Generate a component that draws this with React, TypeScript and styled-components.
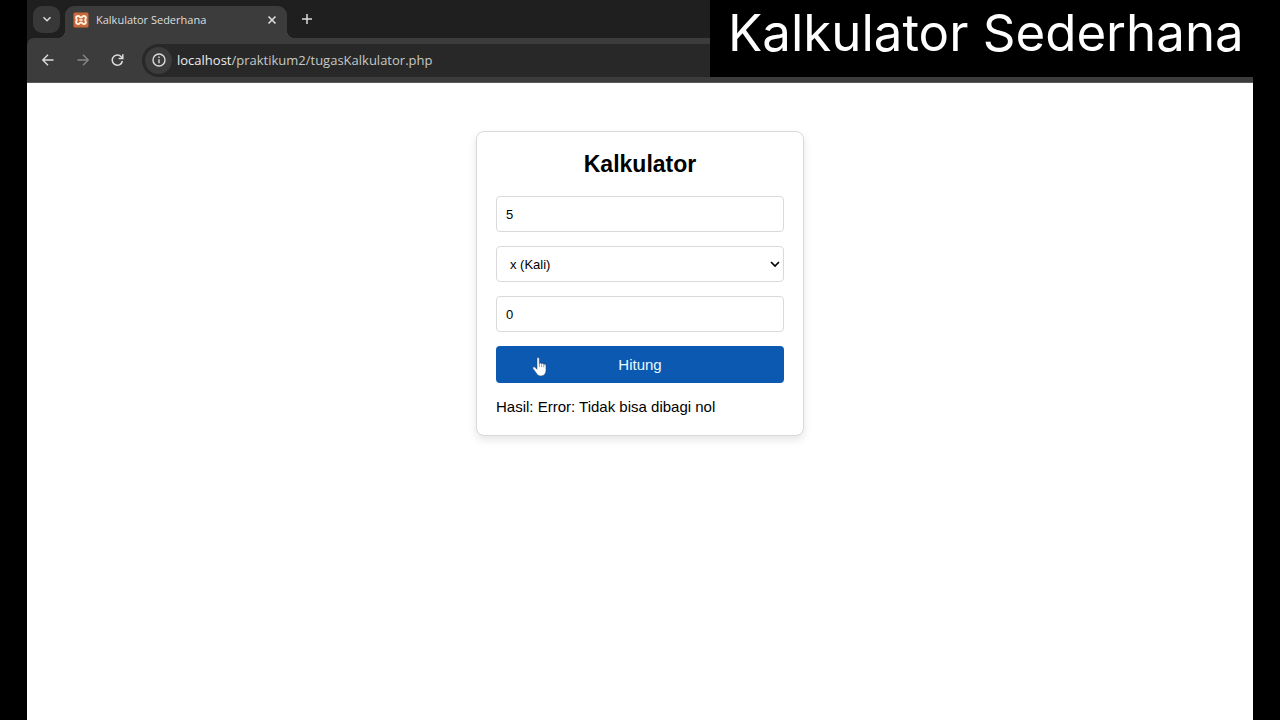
import React from "react";
import styled, { createGlobalStyle } from "styled-components";

const GlobalStyle = createGlobalStyle`
  *, *::before, *::after { box-sizing: border-box; }
  html, body, #root { height: 100%; margin: 0; }
  body { background: #000; font-family: "Liberation Sans", Arial, sans-serif; color: #000; }
  button, input, select { font-family: inherit; margin: 0; }
`;

const Stage = styled.div`
  position: relative;
  min-height: 100%;
  display: flex;
  padding: 0 27px;
`;

const Browser = styled.div`
  flex: 1;
  min-width: 0;
  display: flex;
  flex-direction: column;
  background: #fff;
`;

const TabStrip = styled.div`
  height: 38px;
  display: flex;
  align-items: flex-end;
  padding-left: 6px;
  background: #1f1f1f;
`;

const IconButton = styled.button<{ $size: number; $color?: string; $fill?: string; $radius?: number }>`
  flex: none;
  display: flex;
  align-items: center;
  justify-content: center;
  width: ${(p) => p.$size}px;
  height: ${(p) => p.$size}px;
  padding: 0;
  border: 0;
  border-radius: ${(p) => p.$radius ?? 14}px;
  background: ${(p) => p.$fill ?? "transparent"};
  color: ${(p) => p.$color ?? "#dcdcdc"};
`;

const TabSearch = styled.div`
  align-self: center;
  margin-right: 5px;
`;

const Tab = styled.div`
  position: relative;
  width: 222px;
  height: 32px;
  display: flex;
  align-items: center;
  gap: 7px;
  padding: 0 6px 4px 8px;
  border-radius: 9px 9px 0 0;
  background: #3c3c3c;

  &::before,
  &::after {
    content: "";
    position: absolute;
    bottom: 0;
    width: 8px;
    height: 8px;
  }
  &::before {
    right: 100%;
    background: radial-gradient(circle at 0 0, transparent 8px, #3c3c3c 8px);
  }
  &::after {
    left: 100%;
    background: radial-gradient(circle at 100% 0, transparent 8px, #3c3c3c 8px);
  }
`;

const TabTitle = styled.span`
  flex: 1;
  font: 11px/16px "Open Sans", "Noto Sans", sans-serif;
  color: #dedede;
  white-space: nowrap;
`;

const NewTab = styled.div`
  align-self: center;
  margin-left: 8px;
`;

const ToolbarBack = styled.div`
  background: #1f1f1f;
`;

const Toolbar = styled.div`
  height: 45px;
  display: flex;
  align-items: center;
  gap: 7px;
  padding: 0 7px;
  background: #3c3c3c;
  border-bottom: 1px solid #5a5a5a;
  border-top-left-radius: 7px;
`;

const AddressBar = styled.div`
  flex: 1;
  height: 33px;
  display: flex;
  align-items: center;
  gap: 5px;
  margin-left: 3px;
  padding: 0 3px;
  border-radius: 17px;
  background: #282828;
`;

const Address = styled.div`
  font: 13px/18px "Open Sans", "Noto Sans", sans-serif;
  color: #c6c9c4;
  white-space: nowrap;

  b { font-weight: 400; color: #ececec; }
`;

const Page = styled.main`
  flex: 1;
  display: flex;
  justify-content: center;
  align-items: flex-start;
  padding: 48px 20px;
`;

const Card = styled.form`
  width: 328px;
  display: flex;
  flex-direction: column;
  gap: 14px;
  padding: 19px;
  border: 1px solid #d9d9d9;
  border-radius: 8px;
  background: #fff;
  box-shadow: 0 4px 8px rgba(0, 0, 0, 0.1);
`;

const Title = styled.h1`
  margin: 0 0 4px;
  font-size: 23px;
  line-height: 27px;
  text-align: center;
`;

const Field = styled.input`
  width: 100%;
  height: 36px;
  padding: 0 9px;
  border: 1px solid #d9d9d9;
  border-radius: 4px;
  background: #fff;
  color: #000;
  font-size: 13px;
`;

const SelectWrap = styled.div`
  display: grid;
  align-items: center;

  > * { grid-area: 1 / 1; }
  > svg { justify-self: end; margin-right: 4px; pointer-events: none; }
`;

const Operator = styled(Field).attrs({ as: "select" })`
  appearance: none;
  padding: 0 13px;
`;

const Submit = styled.button`
  position: relative;
  height: 37px;
  border: 0;
  border-radius: 4px;
  background: #0b59b0;
  color: #e8fbff;
  font-size: 15px;
`;

const Pointer = styled.svg`
  position: absolute;
  left: 36px;
  top: 11px;
`;

const Result = styled.p`
  margin: 0;
  font-size: 15px;
  line-height: 19px;
`;

const Banner = styled.div`
  position: absolute;
  top: 0;
  right: 0;
  width: 570px;
  height: 77px;
  padding: 3px 0 0 18px;
  background: #000;
  color: #fff;
  font: 51px/60px Inter, sans-serif;
  white-space: nowrap;
`;

const line = { fill: "none", stroke: "currentColor" } as const;

export default function App() {
  return (
    <>
      <GlobalStyle />
      <Stage>
        <Browser>
          <TabStrip>
            <TabSearch>
              <IconButton $size={27} $fill="#383838" $radius={9} aria-label="Search tabs">
                <svg width="10" height="10" viewBox="0 0 10 10" {...line} strokeWidth="1.5"><path d="M1.5 3.2 5 6.7l3.500-3.500" /></svg>
              </IconButton>
            </TabSearch>
            <Tab>
              <svg width="16" height="16" viewBox="0 0 16 16">
                <rect x="0.500" y="0.500" width="15" height="15" rx="1.500" fill="#c9683a" />
                <path d="M5.200 4C6.800 4 6.800 5.600 8 5.600S9.200 4 10.800 4c1.300 0 2.100.9 2.100 1.900 0 .9-.7 1.300-.7 2.100s.7 1.200.7 2.100c0 1-.8 1.900-2.100 1.900-1.600 0-1.600-1.600-2.800-1.600S6.800 12 5.200 12c-1.300 0-2.100-.9-2.100-1.900 0-.9.7-1.300.7-2.100s-.7-1.200-.7-2.100C3.100 4.900 3.900 4 5.200 4z" fill="none" stroke="#fff1df" strokeWidth="1.900" />
                <path d="M6.300 8h3.400" stroke="#fff1df" strokeWidth="1.600" />
              </svg>
              <TabTitle>Kalkulator Sederhana</TabTitle>
              <IconButton $size={18} aria-label="Close tab">
                <svg width="10" height="10" viewBox="0 0 10 10" {...line} strokeWidth="1.6"><path d="M1.500 1.500l7 7M8.500 1.500l-7 7" /></svg>
              </IconButton>
            </Tab>
            <NewTab>
              <IconButton $size={23} aria-label="New tab">
                <svg width="12" height="12" viewBox="0 0 12 12" {...line} strokeWidth="1.5"><path d="M6 1v10M1 6h10" /></svg>
              </IconButton>
            </NewTab>
          </TabStrip>
          <ToolbarBack>
            <Toolbar>
              <IconButton $size={28} aria-label="Back">
                <svg width="14" height="14" viewBox="0 0 14 14" {...line} strokeWidth="1.400"><path d="M12.500 7H2M7 1.800 1.800 7 7 12.200" /></svg>
              </IconButton>
              <IconButton $size={28} $color="#868686" aria-label="Forward">
                <svg width="14" height="14" viewBox="0 0 14 14" {...line} strokeWidth="1.400"><path d="M1.500 7H12M7 1.800 12.200 7 7 12.200" /></svg>
              </IconButton>
              <IconButton $size={28} aria-label="Reload">
                <svg width="14" height="14" viewBox="0 0 14 14" {...line} strokeWidth="1.500"><path d="M11.400 8A5.100 5.100 0 1 1 10.200 3.700L11.600 5.100" /><path d="M11.800 1.300v4.200H7.600" /></svg>
              </IconButton>
              <AddressBar>
                <IconButton $size={27} $fill="#3c3c3c" aria-label="Site information">
                  <svg width="14" height="14" viewBox="0 0 14 14" {...line} strokeWidth="1.400"><circle cx="7" cy="7" r="6" /><path d="M7 6.200v4M7 3.600v1.500" /></svg>
                </IconButton>
                <Address><b>localhost</b>/praktikum2/tugasKalkulator.php</Address>
              </AddressBar>
            </Toolbar>
          </ToolbarBack>
          <Page>
            <Card onSubmit={(e) => e.preventDefault()}>
              <Title>Kalkulator</Title>
              <Field aria-label="Angka pertama" inputMode="decimal" defaultValue="5" />
              <SelectWrap>
                <Operator aria-label="Operator" defaultValue="kali">
                  <option value="kali">x (Kali)</option>
                </Operator>
                <svg width="10" height="8" viewBox="0 0 10 8" fill="none" stroke="#000" strokeWidth="1.700"><path d="M1 2l4 4 4-4" /></svg>
              </SelectWrap>
              <Field aria-label="Angka kedua" inputMode="decimal" defaultValue="0" />
              <Submit type="submit">
                Hitung
                <Pointer width="16" height="20" viewBox="0 0 16 20" aria-hidden="true">
                  <path d="M5 1.700c0-1.600 2.300-1.600 2.300 0v5.100c.3-1.100 2-.9 2.200.2.500-.8 2-.5 2.200.5.700-.6 2.300-.2 2.300 1.200v4.600c0 3-1.700 5.700-5 5.700-2.700 0-3.700-1.300-4.800-3.100L1 11.700c-.8-1.300.8-2.500 2-1.400l2 2z" fill="#fff" stroke="#24405f" strokeWidth="0.500" />
                  <path d="M7.400 7v3M9.600 7.500v2.700M11.800 8v2.400" stroke="#24405f" strokeWidth="0.500" />
                </Pointer>
              </Submit>
              <Result>Hasil: Error: Tidak bisa dibagi nol</Result>
            </Card>
          </Page>
        </Browser>
        <Banner>Kalkulator Sederhana</Banner>
      </Stage>
    </>
  );
}
